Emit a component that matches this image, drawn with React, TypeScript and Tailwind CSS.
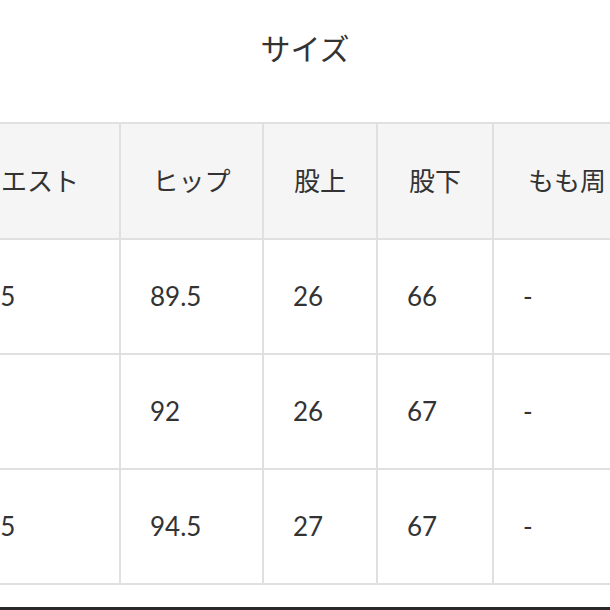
const headers = ["ウエスト", "ヒップ", "股上", "股下", "もも周り"];

const rows = [
  ["71.5", "89.5", "26", "66", "-"],
  ["74", "92", "26", "67", "-"],
  ["76.5", "94.5", "27", "67", "-"],
];

const widths = ["w-[186px]", "w-[143px]", "w-[114px]", "w-[116px]", "w-[174px]"];

export default function App() {
  return (
    <div className="w-[610px] h-[610px] overflow-hidden bg-white text-[#333] font-['Lato','Noto_Sans_CJK_JP',sans-serif]">
      <div className="h-[122px] pt-[33px] text-center text-[30px] leading-none">サイズ</div>
      <table className="ml-[-67px] w-[733px] min-w-[733px] table-fixed border-collapse">
        <thead>
          <tr className="h-[116px] bg-[#f5f5f5]">
            {headers.map((h, i) => (
              <th key={i} className={`${widths[i]} border-2 border-[#e0e0e0] text-center text-[26px] font-normal whitespace-nowrap`}>
                {h}
              </th>
            ))}
          </tr>
        </thead>
        <tbody>
          {rows.map((r, ri) => (
            <tr key={ri} className="h-[115px]">
              {r.map((v, ci) => (
                <td key={ci} className="border-2 border-[#e0e0e0] pl-[29px] text-left text-[26px] whitespace-nowrap">
                  {v}
                </td>
              ))}
            </tr>
          ))}
        </tbody>
      </table>
      <div className="mt-[22px] h-[3px] bg-[#2a2a2a]" />
    </div>
  );
}
